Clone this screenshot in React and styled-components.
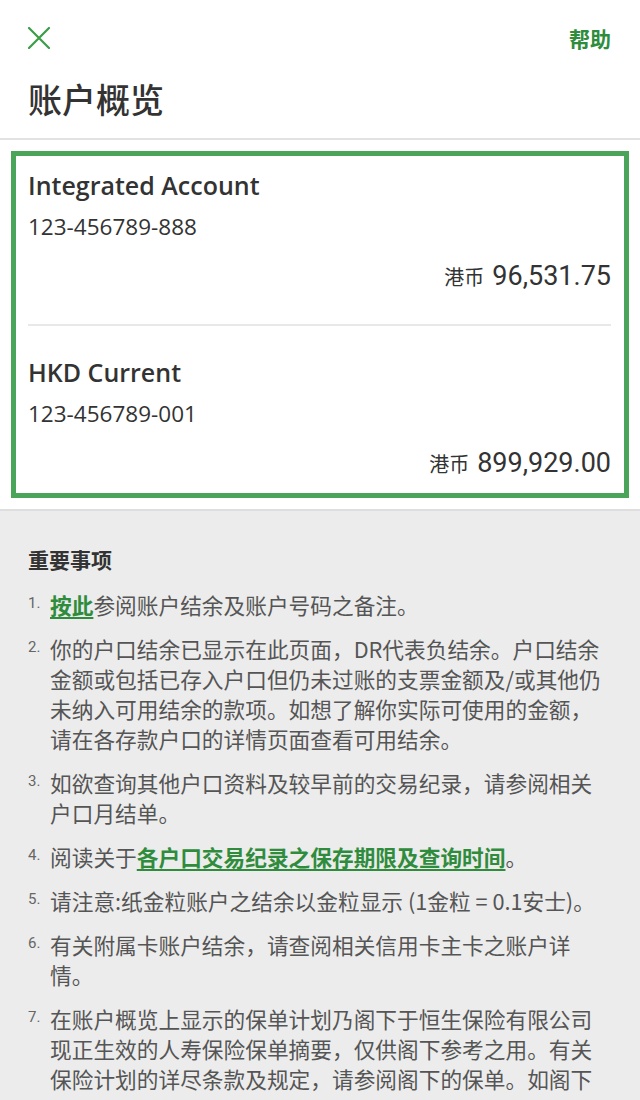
import styled, { createGlobalStyle } from 'styled-components';

const GlobalStyle = createGlobalStyle`
	html, body {
		margin: 0;
		padding: 0;
		background: #ececec;
	}
	body {
		font-family: 'Open Sans', 'Noto Sans CJK SC', sans-serif;
		color: #333;
	}
`;

const accounts = [
	{ name: 'Integrated Account', number: '123-456789-888', amount: '96,531.75' },
	{ name: 'HKD Current', number: '123-456789-001', amount: '899,929.00' },
];

const CloseIcon = () => (
	<svg width='22' height='22' viewBox='0 0 22 22' fill='none'>
		<path d='M1 1L21 21M21 1L1 21' stroke='#3a9d48' strokeWidth='2.2' strokeLinecap='round' />
	</svg>
);

const App = () => {
	return (
		<Page>
			<GlobalStyle />
			<Header>
				<TopBar>
					<IconButton aria-label='close'>
						<CloseIcon />
					</IconButton>
					<HelpLink>帮助</HelpLink>
				</TopBar>
				<Title>账户概览</Title>
			</Header>

			<AccountsSection>
				<AccountBox>
					{accounts.map((acc, i) => (
						<div key={acc.number}>
							{i > 0 && <Divider />}
							<Account>
								<AccountName>{acc.name}</AccountName>
								<AccountNumber>{acc.number}</AccountNumber>
								<AmountRow>
									<Currency>港币</Currency>
									<Amount>{acc.amount}</Amount>
								</AmountRow>
							</Account>
						</div>
					))}
				</AccountBox>
			</AccountsSection>

			<Notes>
				<NotesTitle>重要事项</NotesTitle>
				<NoteList>
					<NoteItem>
						<Marker>1.</Marker>
						<NoteText>
							<NoteLink>按此</NoteLink>参阅账户结余及账户号码之备注。
						</NoteText>
					</NoteItem>
					<NoteItem>
						<Marker>2.</Marker>
						<NoteText>
							你的户口结余已显示在此页面，DR代表负结余。户口结余金额或包括已存入户口但仍未过账的支票金额及/或其他仍未纳入可用结余的款项。如想了解你实际可使用的金额，请在各存款户口的详情页面查看可用结余。
						</NoteText>
					</NoteItem>
					<NoteItem>
						<Marker>3.</Marker>
						<NoteText>如欲查询其他户口资料及较早前的交易纪录，请参阅相关户口月结单。</NoteText>
					</NoteItem>
					<NoteItem>
						<Marker>4.</Marker>
						<NoteText>
							阅读关于<NoteLink>各户口交易纪录之保存期限及查询时间</NoteLink>。
						</NoteText>
					</NoteItem>
					<NoteItem>
						<Marker>5.</Marker>
						<NoteText>请注意:纸金粒账户之结余以金粒显示 (1金粒 = 0.1安士)。</NoteText>
					</NoteItem>
					<NoteItem>
						<Marker>6.</Marker>
						<NoteText>有关附属卡账户结余，请查阅相关信用卡主卡之账户详情。</NoteText>
					</NoteItem>
					<NoteItem>
						<Marker>7.</Marker>
						<NoteText>
							在账户概览上显示的保单计划乃阁下于恒生保险有限公司现正生效的人寿保险保单摘要，仅供阁下参考之用。有关保险计划的详尽条款及规定，请参阅阁下的保单。如阁下
						</NoteText>
					</NoteItem>
				</NoteList>
			</Notes>
		</Page>
	);
};

const Page = styled.div`
	width: 640px;
	height: 1100px;
	overflow: hidden;
	background: #ececec;
`;

const Header = styled.header`
	background: #fff;
	padding: 20px 28px 17px;
	border-bottom: 2px solid #e2e2e2;
`;

const TopBar = styled.div`
	height: 36px;
	display: flex;
	align-items: center;
	justify-content: space-between;
`;

const IconButton = styled.button`
	background: transparent;
	border: none;
	padding: 0;
	width: 22px;
	height: 22px;
	display: grid;
	place-items: center;
	cursor: pointer;
`;

const HelpLink = styled.span`
	font-family: 'Noto Sans CJK SC', sans-serif;
	font-size: 21px;
	font-weight: 700;
	color: #2f8c3c;
	margin-right: 1px;
`;

const Title = styled.h1`
	margin: 21px 0 0;
	font-family: 'Noto Sans CJK SC', sans-serif;
	font-size: 34px;
	line-height: 44px;
	font-weight: 500;
	color: #333;
`;

const AccountsSection = styled.section`
	background: #fff;
	padding: 11px;
	border-bottom: 2px solid #dedede;
`;

const AccountBox = styled.div`
	border: 5px solid #4aa55a;
	padding: 0 13px 0 12px;
`;

const Account = styled.div`
	padding: 13px 0;
	display: flex;
	flex-direction: column;
`;

const Divider = styled.hr`
	border: none;
	border-top: 2px solid #e8e8e8;
	margin: 18px 0 17px;
`;

const AccountName = styled.div`
	font-family: 'Open Sans', sans-serif;
	font-size: 25px;
	font-weight: 600;
	line-height: 32px;
	color: #333;
	margin-bottom: 10px;
`;

const AccountNumber = styled.div`
	font-family: 'Open Sans', sans-serif;
	font-size: 22.5px;
	font-weight: 400;
	line-height: 32px;
	color: #333;
	margin-bottom: 17px;
`;

const AmountRow = styled.div`
	display: flex;
	justify-content: flex-end;
	align-items: baseline;
	gap: 8px;
	line-height: 32px;
	color: #333;
`;

const Currency = styled.span`
	font-family: 'Noto Sans CJK SC', sans-serif;
	font-size: 20px;
`;

const Amount = styled.span`
	font-family: Roboto, sans-serif;
	font-size: 27px;
	font-weight: 400;
`;

const Notes = styled.section`
	padding: 33px 30px 28px 28px;
`;

const NotesTitle = styled.h2`
	margin: 0 0 16px;
	font-family: 'Noto Sans CJK SC', sans-serif;
	font-size: 21px;
	line-height: 30px;
	font-weight: 700;
	color: #333;
`;

const NoteList = styled.ol`
	list-style: none;
	margin: 0;
	padding: 0;
	display: flex;
	flex-direction: column;
	gap: 14px;
`;

const NoteItem = styled.li`
	display: grid;
	grid-template-columns: 22px 1fr;
	font-family: 'Noto Sans CJK SC', sans-serif;
	font-size: 21.7px;
	line-height: 30px;
	color: #555;
`;

const Marker = styled.span`
	font-family: Roboto, sans-serif;
	font-size: 15px;
	line-height: 26px;
	color: #666;
`;

const NoteText = styled.span`
	line-break: strict;
`;

const NoteLink = styled.a`
	color: #2f8c3c;
	font-weight: 700;
	text-decoration: underline;
	text-underline-offset: 3px;
	cursor: pointer;
`;

export default App;
